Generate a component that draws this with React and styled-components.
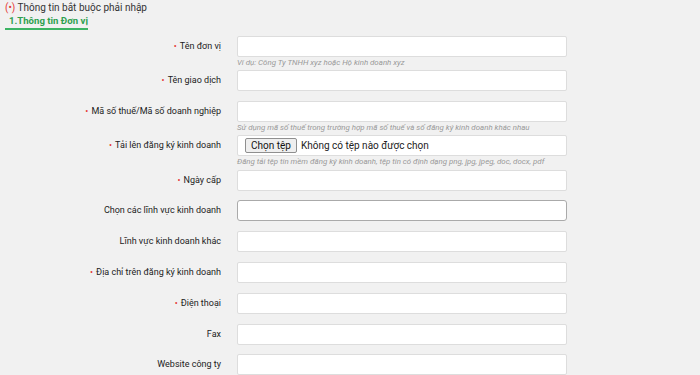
import React from 'react'
import styled, { createGlobalStyle } from 'styled-components'

const GlobalStyle = createGlobalStyle`
  html, body {
    margin: 0;
    padding: 0;
    background: #f1f1f1;
    font-family: Roboto, "Liberation Sans", Arial, sans-serif;
    color: #333;
  }
`

const fields = [
  { label: 'Tên đơn vị', required: true, hint: 'Ví dụ: Công Ty TNHH xyz hoặc Hộ kinh doanh xyz' },
  { label: 'Tên giao dịch', required: true },
  { label: 'Mã số thuế/Mã số doanh nghiệp', required: true, hint: 'Sử dụng mã số thuế trong trường hợp mã số thuế và số đăng ký kinh doanh khác nhau' },
  { label: 'Tải lên đăng ký kinh doanh', required: true, file: true, hint: 'Đăng tải tệp tin mềm đăng ký kinh doanh, tệp tin có định dạng png, jpg, jpeg, doc, docx, pdf' },
  { label: 'Ngày cấp', required: true },
  { label: 'Chọn các lĩnh vực kinh doanh', select: true },
  { label: 'Lĩnh vực kinh doanh khác' },
  { label: 'Địa chỉ trên đăng ký kinh doanh', required: true },
  { label: 'Điện thoại', required: true },
  { label: 'Fax' },
  { label: 'Website công ty' },
]

function App() {
  return (
    <>
      <GlobalStyle />
      <Page>
        <Notice><Star>(•)</Star> Thông tin bắt buộc phải nhập</Notice>
        <SectionTitle>1.Thông tin Đơn vị</SectionTitle>
        <Form>
          {fields.map((f) => (
            <Row key={f.label}>
              <Label>
                {f.required && <Dot>•</Dot>}
                {f.label}
              </Label>
              <Field>
                {f.file ? (
                  <FileBox>
                    <FileButton>Chọn tệp</FileButton>
                    <span>Không có tệp nào được chọn</span>
                  </FileBox>
                ) : (
                  <Input $select={f.select} />
                )}
                {f.hint && <Hint>{f.hint}</Hint>}
              </Field>
            </Row>
          ))}
        </Form>
      </Page>
    </>
  )
}

const Page = styled.div`
  padding: 2px 0 0 5px;
  width: 700px;
  height: 375px;
  box-sizing: border-box;
  overflow: hidden;
`

const Notice = styled.div`
  font-size: 10px;
  line-height: 12px;
  color: #333;
`

const Star = styled.span`
  color: #e53935;
`

const SectionTitle = styled.div`
  width: fit-content;
  white-space: nowrap;
  margin-top: 1px;
  padding: 0 0 1px 4px;
  font-size: 9.6px;
  line-height: 12px;
  font-weight: bold;
  color: #2ea04f;
  border-bottom: 2px solid #3cb464;
`

const Form = styled.div`
  display: flex;
  flex-direction: column;
  gap: 9.8px;
  margin-top: 6px;
`

const Row = styled.div`
  display: grid;
  grid-template-columns: 216px 330px;
  column-gap: 16px;
  align-items: start;
`

const Label = styled.div`
  text-align: right;
  font-size: 9px;
  line-height: 21px;
  color: #222;
`

const Dot = styled.span`
  color: #e53935;
  margin-right: 3px;
`

const Field = styled.div`
  display: flex;
  flex-direction: column;
`

const Input = styled.div`
  height: 21px;
  box-sizing: border-box;
  background: #fff;
  border: 1px solid ${(p) => (p.$select ? '#aaa' : '#ddd')};
  border-radius: ${(p) => (p.$select ? '3px' : '2px')};
`

const FileBox = styled.div`
  height: 21px;
  box-sizing: border-box;
  background: #fff;
  border: 1px solid #ddd;
  border-radius: 2px;
  display: flex;
  align-items: center;
  padding-left: 7px;
  gap: 4px;
  font-size: 10px;
  color: #222;
`

const FileButton = styled.span`
  display: inline-flex;
  align-items: center;
  height: 13px;
  padding: 0 5px;
  border: 1px solid #8f8f8f;
  border-radius: 2px;
  background: #efefef;
  font-size: 10px;
  color: #111;
`

const Hint = styled.div`
  font-size: 7.9px;
  line-height: 11px;
  font-style: italic;
  white-space: nowrap;
  color: #999;
  margin-top: 0;
  margin-bottom: -7.5px;
`

export default App
